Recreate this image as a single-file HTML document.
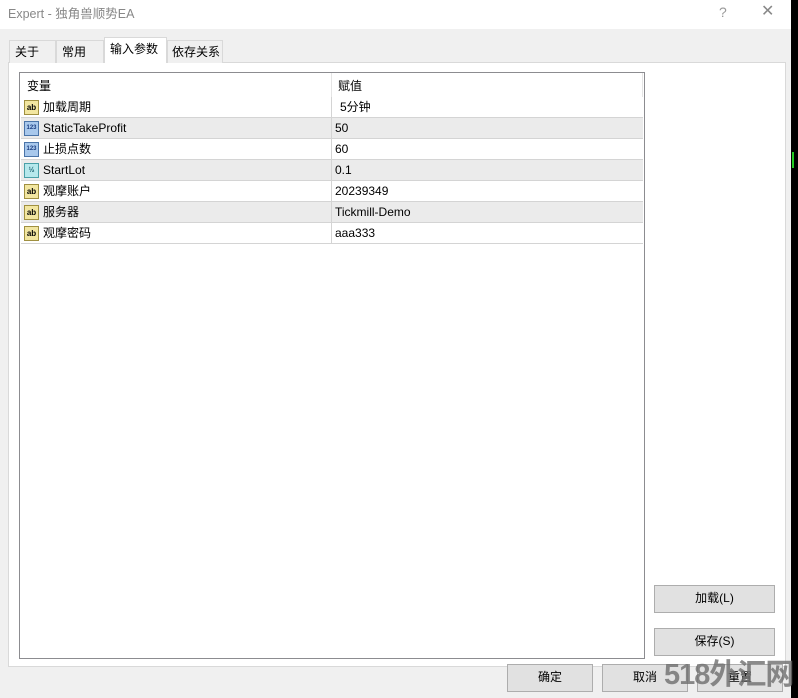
<!DOCTYPE html><html><head><meta charset="utf-8"><style>
*{margin:0;padding:0;box-sizing:border-box}
html,body{width:798px;height:698px;overflow:hidden}
body{background:#f0f0f0;position:relative;font-family:"Liberation Sans","Noto Sans CJK SC",sans-serif;font-size:12px;line-height:15px;color:#000}
.a{position:absolute;white-space:nowrap}
.title{left:0;top:0;width:791px;height:29px;background:#fff}
.title span{position:absolute;left:8px;top:7px;color:#888;font-size:12.5px}
.tab{position:absolute;top:40px;height:23px;border:1px solid #d9d9d9;border-bottom:none;background:#f0f0f0;padding:4px 0 0 5px}
.panel{left:8px;top:62px;width:778px;height:605px;background:#fff;border:1px solid #d9d9d9}
.list{left:19px;top:72px;width:626px;height:587px;background:#fff;border:1px solid #8c8c90}
.row{position:absolute;left:1px;width:622px;height:21px;border-bottom:1px solid #d4d4d4}
.row.g{background:#ebebeb}
.row .n{position:absolute;left:22px;top:3px}
.row .v{position:absolute;left:314px;top:3px}
.ic{position:absolute;left:3px;top:3px;width:15px;height:15px;border:1px solid #a09040;background:#f2e6a0;font-size:8px;line-height:13px;text-align:center;font-weight:bold}
.ic.b{background:#a8c8ec;border-color:#4a74a8;color:#1a3c80;font-size:6px}
.ic.c{background:#b6e8ec;border-color:#4aa0a8;color:#1a6070;font-size:7px}
.btn{position:absolute;background:#e1e1e1;border:1px solid #adadad;text-align:center;line-height:25px}
</style></head><body>
<div class="a title"><span>Expert - 独角兽顺势EA</span>
<span style="left:719px;top:5px;color:#999;font-size:14px">?</span>
<span style="left:761px;top:4px;color:#888;font-size:16px;font-weight:normal">✕</span></div>
<div class="a" style="left:791px;top:0;width:7px;height:698px;background:#000"></div>
<div class="a" style="left:792px;top:152px;width:2px;height:16px;background:#2c2"></div>
<div class="a panel"></div>
<div class="tab" style="left:9px;width:47px">关于</div>
<div class="tab" style="left:56px;width:48px">常用</div>
<div class="tab" style="left:104px;width:63px;top:37px;height:26px;background:#fff;padding-top:4px">输入参数</div>
<div class="tab" style="left:167px;width:56px;padding-left:4px">依存关系</div>
<div class="a list">
<div class="a" style="left:311px;top:0;width:1px;height:24px;background:#e5e5e5"></div>
<div class="a" style="left:622px;top:0;width:1px;height:24px;background:#e5e5e5"></div>
<div class="a" style="left:7px;top:6px">变量</div><div class="a" style="left:318px;top:6px">赋值</div>
<div class="row" style="top:24px"><div class="ic">ab</div><span class="n">加载周期</span><span class="v" style="left:319px">5分钟</span></div>
<div class="row g" style="top:45px"><div class="ic b">123</div><span class="n">StaticTakeProfit</span><span class="v">50</span></div>
<div class="row" style="top:66px"><div class="ic b">123</div><span class="n">止损点数</span><span class="v">60</span></div>
<div class="row g" style="top:87px"><div class="ic c">½</div><span class="n">StartLot</span><span class="v">0.1</span></div>
<div class="row" style="top:108px"><div class="ic">ab</div><span class="n">观摩账户</span><span class="v">20239349</span></div>
<div class="row g" style="top:129px"><div class="ic">ab</div><span class="n">服务器</span><span class="v">Tickmill-Demo</span></div>
<div class="row" style="top:150px"><div class="ic">ab</div><span class="n">观摩密码</span><span class="v">aaa333</span></div>
<div class="a" style="left:311px;top:24px;width:1px;height:147px;background:#d4d4d4"></div>
</div>
<div class="btn" style="left:654px;top:585px;width:121px;height:28px">加载(L)</div>
<div class="btn" style="left:654px;top:628px;width:121px;height:28px">保存(S)</div>
<div class="btn" style="left:507px;top:664px;width:86px;height:28px">确定</div>
<div class="btn" style="left:602px;top:664px;width:86px;height:28px">取消</div>
<div class="btn" style="left:697px;top:664px;width:86px;height:28px">重置</div>
<div class="a" style="left:664px;top:656px;font-size:29px;line-height:38px;font-weight:bold;color:rgba(110,110,110,0.8);letter-spacing:-1px">518外汇网</div>
</body></html>
